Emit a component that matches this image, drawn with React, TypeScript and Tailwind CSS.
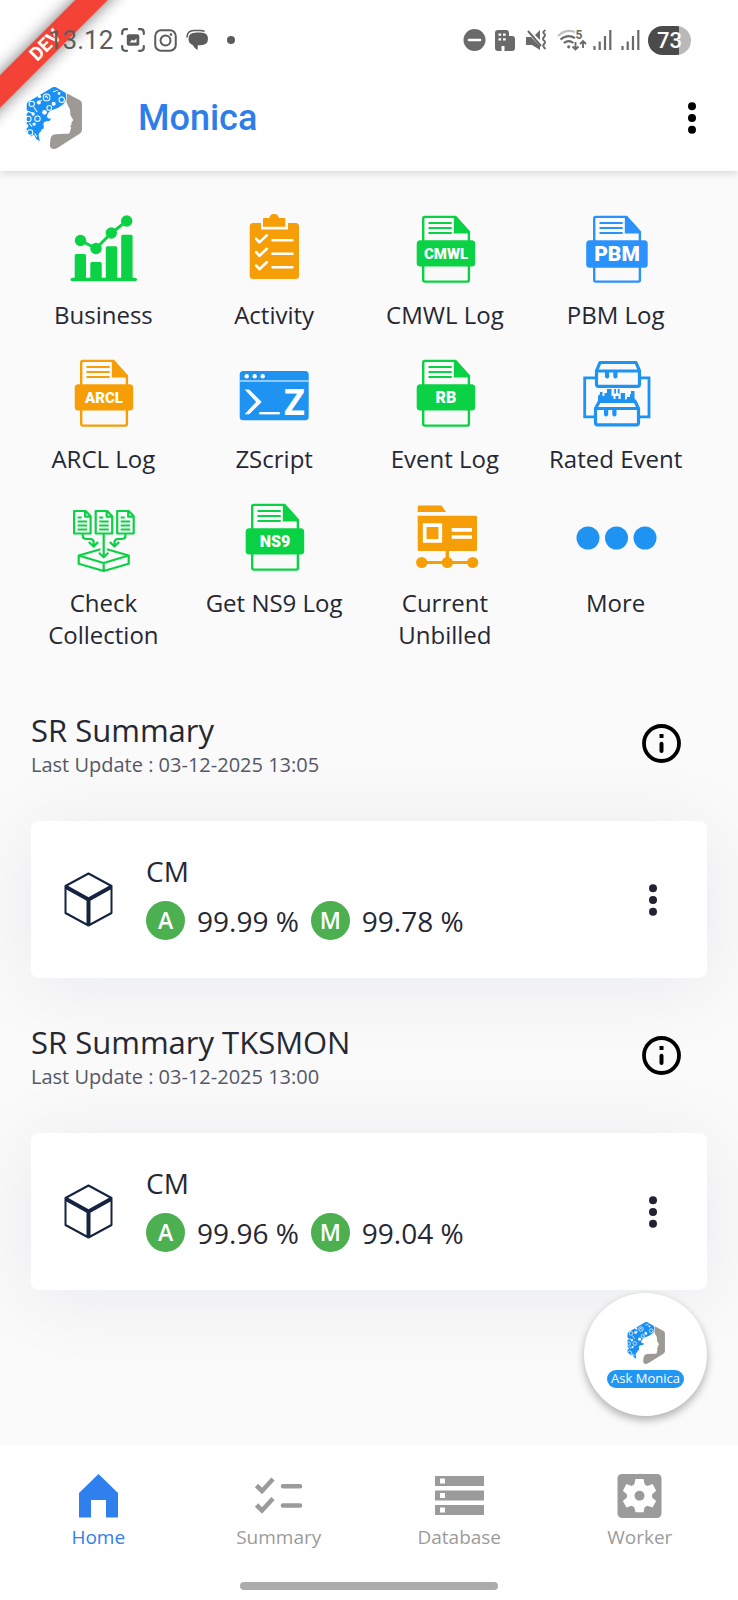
import type { ReactNode } from "react";

const GREEN = "#0bd144";
const ORANGE = "#f59e07";
const BLUE = "#1f93f2";

function Art({ children }: { children: ReactNode }) {
  return (
    <svg width="84" height="72" viewBox="0 0 84 72" fill="none" aria-hidden="true">
      {children}
    </svg>
  );
}

function BusinessIcon() {
  return (
    <Art>
      <g fill={GREEN}>
        <rect x="9.5" y="64.7" width="66.5" height="3.6" rx="1.8" />
        <path d="M13.7 66V42.5q0-1.500 1.500-1.500h8.300q1.500 0 1.500 1.500V66zM29.300 66V50.500q0-1.500 1.500-1.500h8.400q1.500 0 1.500 1.500V66zM44.800 66V34.800q0-1.500 1.500-1.500h8.400q1.500 0 1.500 1.500V66zM60.200 66V23.200q0-1.500 1.500-1.500h8.400q1.500 0 1.500 1.500V66z" />
        <circle cx="19.500" cy="27.500" r="5.700" />
        <circle cx="35" cy="35.500" r="5.700" />
        <circle cx="50.300" cy="20" r="5.700" />
        <circle cx="65.700" cy="8" r="5.700" />
      </g>
      <path d="M19.500 27.500 35 35.500 50.300 20 65.700 8" stroke={GREEN} strokeWidth="3" />
    </Art>
  );
}

function ActivityIcon() {
  return (
    <Art>
      <rect x="17.700" y="10" width="49.300" height="56" rx="3.500" fill={ORANGE} />
      <path d="M29 9h27v7.500H29z" fill="#fafafa" />
      <path d="M31 13.800V6q0-1 1-1h5.200a5 5 0 0 1 9.800 0h5.300q1 0 1 1v7.800z" fill={ORANGE} />
      <g stroke="#fff" strokeWidth="2.600" strokeLinecap="round" strokeLinejoin="round">
        <path d="m24.200 25.800 3.200 3.600 7.400-7M24.200 39.200l3.200 3.600 7.400-7M24.200 52.600l3.200 3.600 7.400-7" />
        <path d="M40.500 27.300h20M40.500 40.700h20M40.500 54.200h20" />
      </g>
    </Art>
  );
}

type LogProps = { text: string; color: string; size: number; wide?: boolean };

function LogIcon({ text, color, size, wide }: LogProps) {
  return (
    <Art>
      <path d="M20.200 30V5.500q0-1.600 1.600-1.600h30.700L65.900 19V30M20.200 50v17q0 1.600 1.600 1.600h42.500q1.600 0 1.600-1.600V50" stroke={color} strokeWidth="2.400" />
      <path d="M50.800 3.500h2l13.700 14.700v2.400H50.800z" fill={color} />
      <path d="M25.500 10h23.200M25.500 15h23.200M25.500 20h23.200" stroke={color} strokeWidth="1.900" />
      <rect x={wide ? 12.200 : 13.700} y="27.300" width={wide ? 61.500 : 58.500} height={wide ? 27.500 : 26.300} rx="3.500" fill={color} />
      <text x="43" y={wide ? 48.300 : 46} textAnchor="middle" fontSize={size} className="font-[Roboto,sans-serif] font-black" fill="#fff">
        {text}
      </text>
    </Art>
  );
}

function ZScriptIcon() {
  return (
    <Art>
      <rect x="7.700" y="14" width="69" height="49.300" rx="3.500" fill={BLUE} />
      <path d="M7.700 24h69" stroke="#fff" strokeWidth="1" />
      <g fill="#fff">
        <circle cx="14.700" cy="19.300" r="2.200" />
        <circle cx="22.700" cy="19.300" r="2.200" />
        <circle cx="30.700" cy="19.300" r="2.200" />
        <path d="M12.700 32.500h4.500L29.700 44.900 17.200 57.300h-4.500l11.500-12.400z" />
        <path d="M27.300 55h20.500v2.400H27.300z" />
      </g>
      <text x="62.500" y="57.500" textAnchor="middle" fontSize="36" className="font-['Noto_Sans',sans-serif] font-bold" fill="#fff">
        Z
      </text>
    </Art>
  );
}

function RatedIcon() {
  return (
    <Art>
      <g stroke={BLUE} strokeWidth="3.200" strokeLinejoin="round">
        <path d="M26 5.500h36l3.500 8.300v13.500q0 2-2 2h-39q-2 0-2-2V13.800zM22.500 14h43" />
        <path d="M21.500 51.500v14.300q0 2 2 2h39q2 0 2-2V51.500L61 44.300H25.500zM21.500 51.500h43" />
        <path d="M22 20.900H10.700v38.900H21M66 20.900h9v38.900H65" strokeWidth="2.800" strokeLinejoin="miter" />
      </g>
      <g fill={BLUE}>
        <path d="M31 14h4.200v6q-2.100 3-4.200 0zM39.300 14h4.200v6q-2.100 3-4.200 0zM30 51h4.200v7q-2.100 3-4.200 0zM38.300 51h4.200v7q-2.100 3-4.200 0z" />
        <path d="M24 45v-6l2-2v-2h2.500v4h2v-3H33v-4h4.500v7h2v3h2v-3h3v3h2.200v-6H51v7l2-1v-2h3v-3h1v-3h3.500v7l1 2v3z" />
        <path d="M40.200 32h1.800v4.500h-1.800zM43.700 32h1.800v4.500h-1.800z" />
      </g>
    </Art>
  );
}

function CollectionIcon() {
  return (
    <Art>
      <g stroke={GREEN} strokeWidth="2.200" strokeLinejoin="round">
        {[12.600, 34.200, 55.700].map((x) => (
          <g key={x} transform={`translate(${x} 10)`}>
            <path d="M.5 0H12l5 5.300V22.500H.5zM11.500 0v5.700H17" />
            <path d="M4 6.500h4M4 10.500h9.500M4 14.500h9.500M4 18.500h9.500" strokeWidth="1.800" />
          </g>
        ))}
        <path d="M21.700 33v1.500q0 3.500 4 3.500h3.500q3.500 0 3.500 4v2.500M27.800 41l4.900 4.500 4.400-4.500" />
        <path d="M64.500 33v1.500q0 3.500-4 3.500H57q-3.500 0-3.500 4v2.500M48.800 41l4.700 4.500 4.600-4.500" />
        <path d="M42.700 33v23M38 51.800l4.700 4.500 4.700-4.500" />
        <path d="m39.500 48.200-21.800 6.300 25 7.500 25-7.500-21.800-6.300M17.700 54.500v8.200l25 7.300 25-7.300v-8.200M42.700 62v8" />
      </g>
    </Art>
  );
}

function UnbilledIcon() {
  return (
    <Art>
      <g fill={ORANGE}>
        <path d="M14.700 11V6q0-1.400 1.400-1.400h21.500q1 0 1.700 1L43 11zM14.700 14.700H72.500q1.500 0 1.500 1.500v32.300q0 1.500-1.500 1.500H16.200q-1.500 0-1.500-1.500z" />
        <path d="M42.600 49h3.400v12h-3.400zM19 59.900h51v3.200H19z" />
        <circle cx="18.700" cy="61.500" r="5.600" />
        <circle cx="44.300" cy="61.500" r="5.600" />
        <circle cx="69.700" cy="61.500" r="5.600" />
      </g>
      <path d="M21.700 24.200h15.600v15.600H21.700zM48.700 28.900H69M48.700 36H69" stroke="#fff" strokeWidth="3.700" />
    </Art>
  );
}

function MoreIcon() {
  return (
    <Art>
      <g fill={BLUE}>
        <circle cx="14" cy="37" r="11.500" />
        <circle cx="42.500" cy="37" r="11.500" />
        <circle cx="71" cy="37" r="11.500" />
      </g>
    </Art>
  );
}

function Logo({ className }: { className: string }) {
  return (
    <svg viewBox="78 258 166 184" className={className} fill="none" aria-hidden="true">
      <path d="M200 277 238 297q6 4 6 11v77q0 8-7 12l-65 41q-12 7-20 1-4-3-3-12l2-17q2-10 14-12 24-2 38-1 7-1 6-10l3-8-3-5 4-4q-1-6 2-10 5-2 1-8-7-9-7-15 2-12-7-25-5-8-4-15z" fill="#9d9a96" />
      <path d="M157 259q5-3 10 0l29 17q4 22-8 34-14 12-32 16-14 5-16 20 3 8 12 6-4 8-14 8-10 2-8 12 3 9-5 15-12 8-9 18l3 14-10-6-8-14-8 6-13-12v-82q0-6 5-9z" fill="#1b90f3" />
      <g stroke="#fff" strokeWidth="3">
        <circle cx="139" cy="289" r="10" />
        <circle cx="184" cy="296" r="8" />
        <circle cx="95" cy="308" r="8" />
        <circle cx="147" cy="320" r="7" />
        <circle cx="85" cy="353" r="8" />
        <circle cx="112" cy="352" r="8" />
        <circle cx="90" cy="393" r="8" />
        <path d="m134 289 4-5 5 8M110 304l15-7M101 318l10 14M82 330l16 5M88 366l8 10M158 272l14-4M104 396l6 10" />
      </g>
      <g fill="#fff">
        <circle cx="116" cy="304" r="6" />
        <circle cx="133" cy="333" r="7" />
        <circle cx="118" cy="286" r="5" />
        <circle cx="176" cy="277" r="4" />
        <circle cx="99" cy="338" r="5" />
        <circle cx="102" cy="368" r="5" />
        <circle cx="79" cy="374" r="6" />
        <circle cx="160" cy="308" r="6" />
        <circle cx="79" cy="332" r="5" />
        <circle cx="128" cy="388" r="5" />
      </g>
      <path d="m140 356 12-5-5 9z" fill="#1b90f3" />
    </svg>
  );
}

function Kebab({ color }: { color: string }) {
  return (
    <svg width="10" height="32" viewBox="0 0 10 32" fill={color} aria-hidden="true">
      <circle cx="5" cy="4.300" r="4" />
      <circle cx="5" cy="16" r="4" />
      <circle cx="5" cy="27.700" r="4" />
    </svg>
  );
}

function Signal() {
  return (
    <svg width="19" height="22" viewBox="0 0 19 22" stroke="#6a6a6a" strokeWidth="2.200" aria-hidden="true">
      <path d="M1.500 17v4M6.700 12.500V21M12 7v14M17.300 1v20" />
    </svg>
  );
}

function StatusBar() {
  return (
    <div className="relative flex h-20 items-center justify-between pr-[47px] pl-12 text-[#5c5c5c]">
      <div className="flex items-center">
        <span className="w-[73px] font-[Roboto,sans-serif] text-[26px]">13.12</span>
        <svg width="24" height="24" viewBox="0 0 24 24" fill="none" stroke="currentColor" strokeWidth="2.200" strokeLinecap="round" aria-hidden="true">
          <path d="M1.200 6V4.500q0-3.300 3.300-3.300H6M18 1.200h1.500q3.300 0 3.300 3.300V6M22.800 18v1.500q0 3.300-3.300 3.300H18M6 22.800H4.500q-3.300 0-3.300-3.300V18" />
          <rect x="5.800" y="6.200" width="12.500" height="11.500" rx="2" fill="currentColor" stroke="none" />
          <path d="m8.500 14.500 2.700-2.700 1.800 1 2.500-2.300v4z" fill="#fff" stroke="none" />
        </svg>
        <svg className="ml-[9px]" width="23" height="23" viewBox="0 0 24 24" fill="none" stroke="currentColor" strokeWidth="2.100" aria-hidden="true">
          <rect x="1.300" y="1.300" width="21.400" height="21.400" rx="6" />
          <circle cx="12" cy="12" r="5.200" />
          <circle cx="17.700" cy="5.800" r="1.400" fill="currentColor" stroke="none" />
        </svg>
        <svg className="ml-[9px]" width="23" height="22" viewBox="0 0 23 22" fill="currentColor" aria-hidden="true">
          <path d="M1 8.500Q1 1.500 8 1.500h6q3 0 4.500 1" fill="none" stroke="currentColor" strokeWidth="1.600" />
          <path d="M10.500 3.500h4q7.500 0 7.500 6.300t-7.500 6.400h-2.800V21q-3.700-2-5-5Q2.500 14.800 2.500 9.800q0-6.300 8-6.300z" />
        </svg>
        <span className="ml-[18px] size-2 rounded-full bg-[#5c5c5c]" />
      </div>
      <div className="flex items-center">
        <svg width="23" height="22" viewBox="0 0 23 22" aria-hidden="true">
          <circle cx="11.500" cy="11" r="11" fill="#6a6a6a" />
          <path d="M6 11h11" stroke="#fff" strokeWidth="2.600" strokeLinecap="round" />
        </svg>
        <svg className="ml-[9px]" width="20" height="21" viewBox="0 0 20 21" fill="#6a6a6a" aria-hidden="true">
          <path d="M3 0h8q3 0 3 3v3h3q3 0 3 3v9q0 3-3 3H9.500v-5h-3v5H3q-3 0-3-3V3q0-3 3-3z" />
          <path d="M3.500 3.500h2.700v2.300H3.500zM8 3.500h2.700v2.300H8zM3.500 8.200h2.700v2.300H3.500zM8 8.200h2.700v2.300H8z" fill="#fff" />
        </svg>
        <svg className="ml-[11px]" width="21" height="22" viewBox="0 0 21 22" fill="#6a6a6a" aria-hidden="true">
          <path d="M0 8h5l9 9v4L6 16H0zM9 6l5-5v10z" />
          <path d="m2 2 13 15" stroke="#6a6a6a" strokeWidth="2" />
          <path d="M19.500 1q-3.500 2-1.500 3.500t0 3.500 0 3.500 0 3.500 1.500 5" fill="none" stroke="#6a6a6a" strokeWidth="2" />
        </svg>
        <svg className="ml-2.5" width="30" height="24" viewBox="0 0 30 24" fill="none" stroke="#6a6a6a" strokeWidth="2.100" aria-hidden="true">
          <path d="M1 8Q9 .5 18 4" stroke="#c0c0c0" />
          <path d="M3.500 11.500q7-6 14.500-1.500M6.800 15q5-3.800 9.500 0" />
          <circle cx="11.700" cy="18.800" r="1.600" fill="#6a6a6a" stroke="none" />
          <path d="M18.500 14v7.500m-3-3 3 3 3-3M26 20v-7m-3 3 3-3 3 3" strokeWidth="1.900" />
          <text x="18.500" y="10.500" fontSize="12" className="font-[Roboto,sans-serif] font-bold" fill="#6a6a6a" stroke="none">
            5
          </text>
        </svg>
        <span className="ml-1.5 flex gap-[9px]">
          <Signal />
          <Signal />
        </span>
        <span className="ml-2 flex h-[29px] w-[43px] items-center justify-center rounded-full bg-linear-to-r from-[#4b4b4b] from-73% to-[#b9b9b9] to-73% font-[Roboto,sans-serif] text-[22px] font-medium text-white">
          73
        </span>
      </div>
    </div>
  );
}

const shortcuts: { label: string; icon: ReactNode }[] = [
  { label: "Business", icon: <BusinessIcon /> },
  { label: "Activity", icon: <ActivityIcon /> },
  { label: "CMWL Log", icon: <LogIcon text="CMWL" color={GREEN} size={15} /> },
  { label: "PBM Log", icon: <LogIcon text="PBM" color="#2b91fb" size={21} wide /> },
  { label: "ARCL Log", icon: <LogIcon text="ARCL" color={ORANGE} size={15} /> },
  { label: "ZScript", icon: <ZScriptIcon /> },
  { label: "Event Log", icon: <LogIcon text="RB" color={GREEN} size={16} /> },
  { label: "Rated Event", icon: <RatedIcon /> },
  { label: "Check Collection", icon: <CollectionIcon /> },
  { label: "Get NS9 Log", icon: <LogIcon text="NS9" color={GREEN} size={16} /> },
  { label: "Current Unbilled", icon: <UnbilledIcon /> },
  { label: "More", icon: <MoreIcon /> },
];

function Metric({ letter, value }: { letter: string; value: string }) {
  return (
    <span className="flex items-center gap-3">
      <span className="flex size-[39px] items-center justify-center rounded-full bg-[#4caf50] text-[23px] font-semibold text-white">
        {letter}
      </span>
      <span>{value}</span>
    </span>
  );
}

type SummaryProps = { title: string; updated: string; a: string; m: string };

function SummarySection({ title, updated, a, m }: SummaryProps) {
  return (
    <section className="mb-[47px]">
      <div className="flex items-start justify-between pr-[26px]">
        <div>
          <h2 className="text-[31px] leading-[34px] font-medium">{title}</h2>
          <p className="mt-1.5 text-[20px] leading-6 text-[#545866]">Last Update : {updated}</p>
        </div>
        <button type="button" aria-label={`About ${title}`} className="mt-[11px]">
          <svg width="39" height="39" viewBox="0 0 39 39" fill="none" stroke="#000" aria-hidden="true">
            <circle cx="19.500" cy="19.500" r="17.500" strokeWidth="3.800" />
            <path d="M19.500 19.700v7.300" strokeWidth="4" strokeLinecap="round" />
            <path d="M17.500 10h4v4h-4z" fill="#000" stroke="none" />
          </svg>
        </button>
      </div>
      <article className="mt-11 flex items-center rounded-lg bg-white py-8 pr-[49px] pl-[33px] shadow-[0_8px_80px_rgba(20,30,80,0.07)]">
        <svg width="49" height="55" viewBox="0 0 49 55" fill="none" stroke="#14233f" strokeLinejoin="round" aria-hidden="true">
          <path d="M24.500 1.500 47.500 14v27L24.500 53.500 1.500 41V14z" strokeWidth="2" />
          <path d="m2 15 22.500 12.500L47 15M24.500 27.500v25" strokeWidth="4" />
        </svg>
        <div className="ml-[33px] flex-1 pb-1.5 text-[28px]">
          <h3 className="leading-9">CM</h3>
          <div className="mt-3 flex h-[39px] items-center gap-3">
            <Metric letter="A" value={a} />
            <Metric letter="M" value={m} />
          </div>
        </div>
        <button type="button" aria-label={`${title} options`}>
          <Kebab color="#20242f" />
        </button>
      </article>
    </section>
  );
}

const tabs: { label: string; icon: ReactNode; active?: boolean }[] = [
  {
    label: "Home",
    active: true,
    icon: <path d="M24.500 1 44 20v24.500H32V27H17v17.500H5V20z" fill="currentColor" />,
  },
  {
    label: "Summary",
    icon: (
      <g fill="none" stroke="currentColor" strokeWidth="4.600">
        <path d="m2.500 12.500 5.500 5.500L19 6M2.500 32l5.500 5.500 11-12" />
        <path d="M29 13.200h17M29 32.500h17" strokeLinecap="round" />
      </g>
    ),
  },
  {
    label: "Database",
    icon: (
      <g fill="currentColor">
        <path fillRule="evenodd" d="M0 3h49v10H0zm5 2.500v5h5v-5zM0 17.500h49v10H0zM5 20v5h5v-5zM0 32h49v10H0zm5 2.500v5h5v-5z" />
      </g>
    ),
  },
  {
    label: "Worker",
    icon: (
      <>
        <rect x="2.500" y="1" width="44" height="44" rx="4.500" fill="currentColor" />
        <path d="M20 6h9l1.200 6 3 1.700 5.800-2 4 7.300-4.500 4v3.500l4.500 4-4 7.300-5.800-2-3 1.700L29 43h-9l-1.200-5.500-3-1.700-5.800 2-4-7.300 4.500-4V23L6 19l4-7.300 5.800 2 3-1.700z" fill="#fff" transform="translate(2.450 .55) scale(.9)" />
        <circle cx="24.500" cy="22.800" r="5" fill="currentColor" />
      </>
    ),
  },
];

export default function App() {
  return (
    <div className="relative flex min-h-screen flex-col overflow-hidden bg-[#fafafa] font-['Open_Sans','Noto_Sans',sans-serif] text-[#252833]">
      <header className="relative z-10 bg-white pb-[15px] shadow-[0_2px_8px_rgba(0,0,0,0.15)]">
        <div className="absolute top-0 left-0 size-40 overflow-hidden">
          <div className="absolute top-[34px] -left-[54px] flex h-[23px] w-[200px] -rotate-45 items-center justify-center bg-[#f44336] font-[Roboto,sans-serif] text-[19px] font-bold text-white shadow-[0_0_16px_rgba(0,0,0,0.55)]">
            DEV
          </div>
        </div>
        <StatusBar />
        <div className="flex h-[76px] items-center pr-[41px] pl-[26px]">
          <Logo className="h-[62px] w-14" />
          <h1 className="ml-14 flex-1 font-[Roboto,sans-serif] text-[36px] font-medium text-[#2f7de9]">Monica</h1>
          <button type="button" aria-label="Menu">
            <Kebab color="#000" />
          </button>
        </div>
      </header>

      <main className="flex-1 pt-[42px]">
        <div className="mr-[37px] ml-[18px] grid grid-cols-4 gap-y-[26px]">
          {shortcuts.map(({ label, icon }) => (
            <button key={label} type="button" className="flex flex-col items-center px-3 text-[24px] leading-8">
              {icon}
              <span className="-mx-3 mt-3.5 max-w-[160px]">{label}</span>
            </button>
          ))}
        </div>
        <div className="mt-[62px] px-[31px]">
          <SummarySection title="SR Summary" updated="03-12-2025 13:05" a="99.99 %" m="99.78 %" />
          <SummarySection title="SR Summary TKSMON" updated="03-12-2025 13:00" a="99.96 %" m="99.04 %" />
        </div>
      </main>

      <button
        type="button"
        className="absolute right-[31px] bottom-[184px] z-10 flex size-[123px] flex-col items-center justify-center rounded-full bg-white shadow-[0_4px_8px_rgba(0,0,0,0.3)]"
      >
        <Logo className="h-[42px] w-[38px]" />
        <span className="mt-1.5 flex h-[18px] items-center rounded-full bg-[#2196f3] px-1 text-[13px] font-medium whitespace-nowrap text-white">
          Ask Monica
        </span>
      </button>

      <footer className="relative bg-white px-2 pt-[27px] pb-2.5">
        <nav className="grid grid-cols-4">
          {tabs.map(({ label, icon, active }) => (
            <a
              key={label}
              href={`#${label.toLowerCase()}`}
              className={
                active
                  ? "flex flex-col items-center text-[19px] leading-6 text-[#2f80ed]"
                  : "flex flex-col items-center text-[19px] leading-6 text-[#9b9b9b]"
              }
            >
              <svg width="49" height="46" viewBox="0 0 49 46" aria-hidden="true">
                {icon}
              </svg>
              <span className="mt-1.5">{label}</span>
            </a>
          ))}
        </nav>
        <div className="mx-auto mt-[33px] h-2 w-[258px] rounded-full bg-[#acacac]" />
      </footer>
    </div>
  );
}
